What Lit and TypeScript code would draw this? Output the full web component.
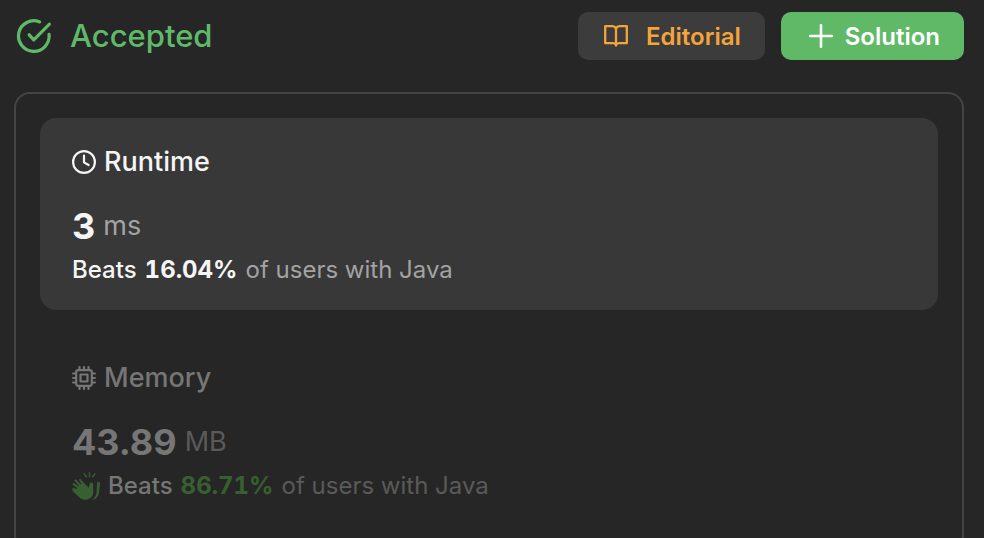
import { LitElement, html, css, svg, nothing, TemplateResult } from "lit";
import { customElement, property } from "lit/decorators.js";

const checkIcon = svg`<svg class="icon" viewBox="0 0 36 36" fill="none" stroke="currentColor" stroke-width="3.200" stroke-linecap="round" stroke-linejoin="round" aria-hidden="true">
  <path d="M23.600 3.900A15.300 15.300 0 1 0 33 16.300"/><path d="M13.200 16.800l4.600 5L33.400 6.200"/></svg>`;

const bookIcon = svg`<svg class="icon" viewBox="0 0 24 24" fill="none" stroke="currentColor" stroke-width="2.300" stroke-linejoin="round" stroke-linecap="round" aria-hidden="true">
  <path d="M12 4.400C11.300 3 10 2.200 8.500 2.200H1.200V19.200H9.500C10.700 19.200 11.500 19.800 12 21C12.500 19.800 13.300 19.200 14.500 19.200H22.800V2.200H15.500C14 2.200 12.700 3 12 4.400Z"/><path d="M12 4.400V21.600"/></svg>`;

const plusIcon = svg`<svg class="icon" viewBox="0 0 24 24" fill="none" stroke="currentColor" stroke-width="2.600" stroke-linecap="round" aria-hidden="true">
  <path d="M12 1.200V22.800M1.200 12H22.800"/></svg>`;

const clockIcon = svg`<svg class="icon" viewBox="0 0 24 24" fill="none" stroke="currentColor" stroke-width="2.200" stroke-linecap="round" stroke-linejoin="round" aria-hidden="true">
  <circle cx="12" cy="12" r="10.900"/><path d="M12 5.700V12.400L16.600 15"/></svg>`;

const chipIcon = svg`<svg class="icon" viewBox="0 0 24 24" fill="none" stroke="currentColor" stroke-width="2.200" stroke-linecap="round" stroke-linejoin="round" aria-hidden="true">
  <rect x="4.200" y="4.200" width="15.600" height="15.600" rx="2"/><rect x="8.500" y="8.500" width="7" height="7"/>
  <path d="M7.500 1.100V4M12 1.100V4M16.500 1.100V4M7.500 20V22.900M12 20V22.900M16.500 20V22.900M1.100 7.500H4M1.100 12H4M1.100 16.500H4M20 7.500H22.900M20 12H22.900M20 16.500H22.900"/></svg>`;

const clapIcon = svg`<svg class="icon" viewBox="0 0 28 28" fill="none" stroke="currentColor" stroke-linecap="round" stroke-linejoin="round" aria-hidden="true">
  <path stroke-width="2.200" d="M9 19L1.400 17.200M9 17.500L1.600 12.200M10 15.500L3.600 8.600M13 15.500L8.200 8"/>
  <path fill="currentColor" stroke="none" d="M4 17.200L8 13.600L10.500 9.500L16.800 15.800L17.800 11.200C19.600 9.800 21.400 11 21.200 13L21.200 20.600C21 25 17.600 27.800 13.600 27.800C11 27.800 9.200 27 7.600 25.600L1 19.400C-.2 17.800 .8 16.400 2.300 17Z"/>
  <path fill="currentColor" stroke="none" d="M25.200 10C27.200 9 28.200 10.300 28 12.200L27 20.600C26.400 25.200 23.400 27.800 19.800 27.900C22.600 26 24.300 23.800 24.500 20.600Z"/>
  <path stroke-width="1.500" d="M12.200 1.900L14.400 4.800M17.500 .8V4.400M22.800 1.900L20.800 4.800"/></svg>`;

@customElement("metric-tile")
export class MetricTile extends LitElement {
  @property() label = "";
  @property() value = "";
  @property() unit = "";
  @property() beats = "";
  @property() language = "Java";
  @property({ attribute: false }) icon?: TemplateResult;
  @property({ type: Boolean, reflect: true }) active = false;
  @property({ type: Boolean, reflect: true }) top = false;

  static styles = css`
    :host {
      --strong: #767676;
      --soft: #5a5a5a;
      --rank: #376030;
      display: block;
      border-radius: 16px;
    }
    :host([active]) {
      --strong: #f5f5f5;
      --soft: #a3a3a3;
      --rank: #f5f5f5;
      background: #383838;
    }
    .tile {
      display: flex;
      flex-direction: column;
      box-sizing: border-box;
      width: 100%;
      padding: 24px 32px;
      border: 0;
      background: none;
      color: var(--strong);
      font: inherit;
      text-align: left;
      cursor: pointer;
    }
    .title {
      display: flex;
      align-items: center;
      gap: 8px;
      font-size: 27px;
      font-weight: 500;
      line-height: 40px;
    }
    .title .icon {
      width: 24px;
      height: 24px;
    }
    .value {
      display: flex;
      align-items: center;
      gap: 8px;
      margin-top: 24px;
      line-height: 40px;
    }
    .number {
      font-size: 36px;
      font-weight: 700;
    }
    .unit {
      color: var(--soft);
      font-size: 27px;
    }
    .rank {
      display: flex;
      align-items: center;
      gap: 8px;
      margin-top: 8px;
      font-size: 24px;
      line-height: 32px;
      white-space: nowrap;
    }
    .rank .icon {
      width: 28px;
      height: 28px;
      color: var(--rank);
    }
    .verb {
      font-weight: 500;
    }
    .percent {
      color: var(--rank);
      font-weight: 700;
      font-variant-numeric: tabular-nums;
    }
    .rest {
      color: var(--soft);
    }
  `;

  render() {
    return html`<button class="tile" type="button" aria-pressed=${this.active ? "true" : "false"}>
      <span class="title">${this.icon}<span>${this.label}</span></span>
      <span class="value"><span class="number">${this.value}</span><span class="unit">${this.unit}</span></span>
      <span class="rank">
        ${this.top ? clapIcon : nothing}
        <span class="verb">Beats</span>
        <span class="percent">${this.beats}</span>
        <span class="rest">of users with ${this.language}</span>
      </span>
    </button>`;
  }
}

@customElement("app-root")
export class AppRoot extends LitElement {
  static styles = css`
    :host {
      display: block;
      box-sizing: border-box;
      height: 100vh;
      overflow: hidden;
      padding: 12px 20px 0 14px;
      background: #262626;
      font-family: Inter, "Liberation Sans", sans-serif;
    }
    .header {
      display: flex;
      align-items: center;
      justify-content: space-between;
      gap: 16px;
    }
    .status {
      display: flex;
      align-items: center;
      gap: 18px;
      margin: 0;
      padding-left: 2px;
      color: #5eba69;
      font-size: 31px;
      font-weight: 500;
      line-height: 48px;
    }
    .status .icon {
      width: 36px;
      height: 36px;
    }
    .actions {
      display: flex;
      gap: 16px;
    }
    .action {
      display: flex;
      align-items: center;
      height: 48px;
      gap: 16px;
      padding: 0 24px;
      border: 0;
      border-radius: 10px;
      background: #3c3c3c;
      color: #f5a43a;
      font: inherit;
      font-size: 24px;
      font-weight: 600;
      cursor: pointer;
    }
    .action .icon {
      width: 28px;
      height: 24px;
    }
    .action.primary {
      gap: 8px;
      background: #5fb967;
      color: #ffffff;
    }
    .primary .icon {
      width: 32px;
    }
    .panel {
      display: flex;
      flex-direction: column;
      gap: 24px;
      margin-top: 32px;
      padding: 24px;
      border: 2px solid #454545;
      border-radius: 16px;
    }
  `;

  render() {
    return html`
      <header class="header">
        <h1 class="status">${checkIcon}<span>Accepted</span></h1>
        <div class="actions">
          <button class="action" type="button">${bookIcon}<span>Editorial</span></button>
          <button class="action primary" type="button">${plusIcon}<span>Solution</span></button>
        </div>
      </header>
      <main class="panel">
        <metric-tile active label="Runtime" value="3" unit="ms" beats="16.04%" .icon=${clockIcon}></metric-tile>
        <metric-tile top label="Memory" value="43.89" unit="MB" beats="86.71%" .icon=${chipIcon}></metric-tile>
      </main>
    `;
  }
}
